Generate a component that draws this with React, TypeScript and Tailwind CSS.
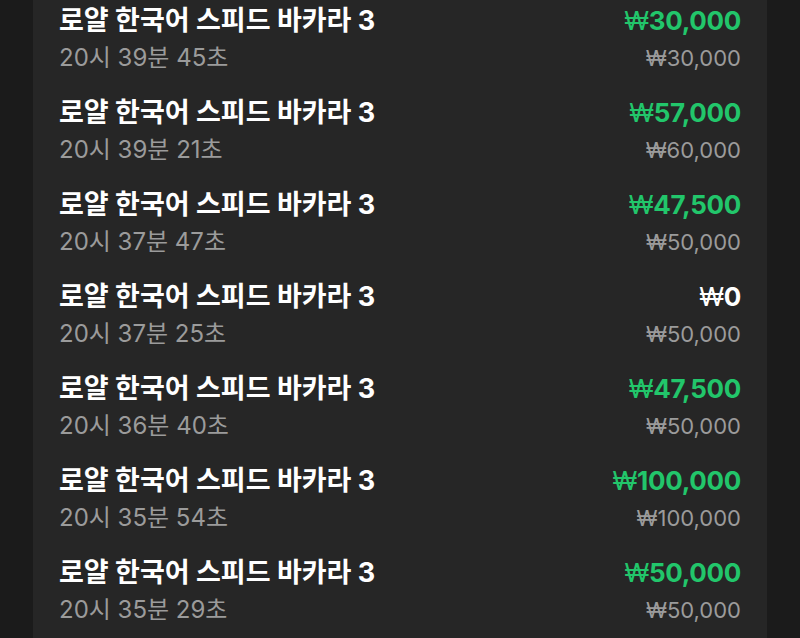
import React from "react";

interface BetRow {
  time: string;
  win: string;
  bet: string;
  zero?: boolean;
}

const rows: BetRow[] = [
  { time: "20시 39분 45초", win: "30,000", bet: "₩30,000" },
  { time: "20시 39분 21초", win: "57,000", bet: "₩60,000" },
  { time: "20시 37분 47초", win: "47,500", bet: "₩50,000" },
  { time: "20시 37분 25초", win: "0", bet: "₩50,000", zero: true },
  { time: "20시 36분 40초", win: "47,500", bet: "₩50,000" },
  { time: "20시 35분 54초", win: "100,000", bet: "₩100,000" },
  { time: "20시 35분 29초", win: "50,000", bet: "₩50,000" },
];

export default function App() {
  return (
    <div
      className="w-[800px] h-[638px] overflow-hidden bg-[#1b1b1b] flex justify-center"
      style={{ fontFamily: "Inter, 'Noto Sans CJK KR', sans-serif" }}
    >
      <div className="w-[734px] h-full bg-[#262626] pt-[5px] px-[26px]">
        {/* === bet history rows === */}
        {rows.map((row, i) => (
          <div key={i} className="h-[92px] flex justify-between">
            <div className="flex flex-col">
              <p className="text-[27px] leading-[32px] font-bold text-white">
                로얄 한국어 스피드 바카라 3
              </p>
              <p className="mt-[6px] text-[24px] leading-[30px] text-[#9b9b9b]">
                {row.time}
              </p>
            </div>
            <div className="flex flex-col items-end">
              <p
                className={`text-[26px] leading-[32px] font-bold tracking-[-0.3px] ${
                  row.zero ? "text-white" : "text-[#22c66b]"
                }`}
              >
                <span className="font-normal">₩</span>
                {row.win}
              </p>
              <p className="mt-[6px] text-[22px] leading-[30px] text-[#9b9b9b]">
                {row.bet}
              </p>
            </div>
          </div>
        ))}
      </div>
    </div>
  );
}
